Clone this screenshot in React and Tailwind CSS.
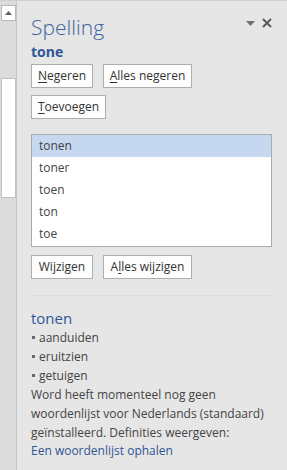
import { useState } from 'react';

const suggestions = ['tonen', 'toner', 'toen', 'ton', 'toe'];
const synonyms = ['aanduiden', 'eruitzien', 'getuigen'];

function PaneButton({ children, className = '' }) {
    return (
        <button
            type="button"
            className={`h-[24px] border border-[#adadad] bg-[#fdfdfd] text-[12px] leading-none text-[#333] ${className}`}
        >
            {children}
        </button>
    );
}

function Scrollbar() {
    return (
        <div className="flex w-[17px] shrink-0 flex-col border-r border-[#c6c6c6] bg-[#dcdcdc] pt-[4px] pl-[1px]">
            <div className="flex h-[16px] w-[15px] items-center justify-center border border-[#b9b9b9] bg-white">
                <svg width="7" height="4" viewBox="0 0 7 4">
                    <path d="M0 4 L3.5 0 L7 4 Z" fill="#606060" />
                </svg>
            </div>
            <div className="mt-[57px] h-[120px] w-[15px] border border-[#c2c2c2] bg-white" />
        </div>
    );
}

export default function App() {
    const [selected, setSelected] = useState(0);

    return (
        <div
            className="flex h-[470px] w-[287px] overflow-hidden border-t border-[#d0d0d0] bg-[#e6e6e6] text-[#444]"
            style={{ fontFamily: '"Open Sans", "Noto Sans", sans-serif' }}
        >
            <Scrollbar />

            <div className="flex-1 pl-[14px] pr-[14px]">
                <div className="flex items-start justify-between">
                    <h1 className="mt-[11px] text-[21px] leading-[30px] font-light text-[#41639d]">
                        Spelling
                    </h1>
                    <div className="mt-[17px] flex items-center gap-[7px] pr-[1px]">
                        <svg width="9" height="5" viewBox="0 0 9 5">
                            <path d="M0 0 L9 0 L4.5 5 Z" fill="#707070" />
                        </svg>
                        <svg width="10" height="10" viewBox="0 0 10 10">
                            <path
                                d="M1 1 L9 9 M9 1 L1 9"
                                stroke="#5a5a5a"
                                strokeWidth="2"
                            />
                        </svg>
                    </div>
                </div>

                <p className="text-[14px] leading-[20px] font-bold text-[#2e5597]">
                    tone
                </p>

                <div className="mt-[2px] flex gap-[10px]">
                    <PaneButton className="w-[62px]">
                        <span className="underline underline-offset-2">N</span>egeren
                    </PaneButton>
                    <PaneButton className="w-[89px]">
                        <span className="underline underline-offset-2">A</span>lles negeren
                    </PaneButton>
                </div>
                <div className="mt-[5px]">
                    <PaneButton className="w-[75px]">
                        <span className="underline underline-offset-2">T</span>oevoegen
                    </PaneButton>
                </div>

                <ul className="mt-[15px] h-[113px] w-[241px] border border-[#ababab] bg-white">
                    {suggestions.map((word, index) => (
                        <li
                            key={word}
                            onClick={() => setSelected(index)}
                            className={`h-[22px] pl-[7px] text-[12px] leading-[22px] ${
                                selected === index ? 'bg-[#c5d8f0]' : ''
                            }`}
                        >
                            {word}
                        </li>
                    ))}
                </ul>

                <div className="mt-[8px] flex gap-[10px]">
                    <PaneButton className="w-[62px]">
                        Wijzi<span className="underline underline-offset-2">g</span>en
                    </PaneButton>
                    <PaneButton className="w-[89px]">
                        A<span className="underline underline-offset-2">l</span>les wijzigen
                    </PaneButton>
                </div>

                <div className="mt-[16px] w-[241px] border-t border-[#dcdcdc]" />

                <h2 className="mt-[12px] text-[15px] leading-[20px] font-normal text-[#2e5597]">
                    tonen
                </h2>
                <ul className="text-[12px] leading-[19px]">
                    {synonyms.map((word) => (
                        <li key={word} className="flex h-[19px] items-center">
                            <span className="mr-[4px] ml-[1px] inline-block h-[3px] w-[3px] bg-[#666]" />
                            {word}
                        </li>
                    ))}
                </ul>
                <p className="text-[12px] leading-[19px]">
                    Word heeft momenteel nog geen
                    <br />
                    woordenlijst voor Nederlands (standaard)
                    <br />
                    geïnstalleerd. Definities weergeven:
                </p>
                <a href="#" className="block text-[12px] leading-[17px] text-[#2e5597]">
                    Een woordenlijst ophalen
                </a>
            </div>
        </div>
    );
}
